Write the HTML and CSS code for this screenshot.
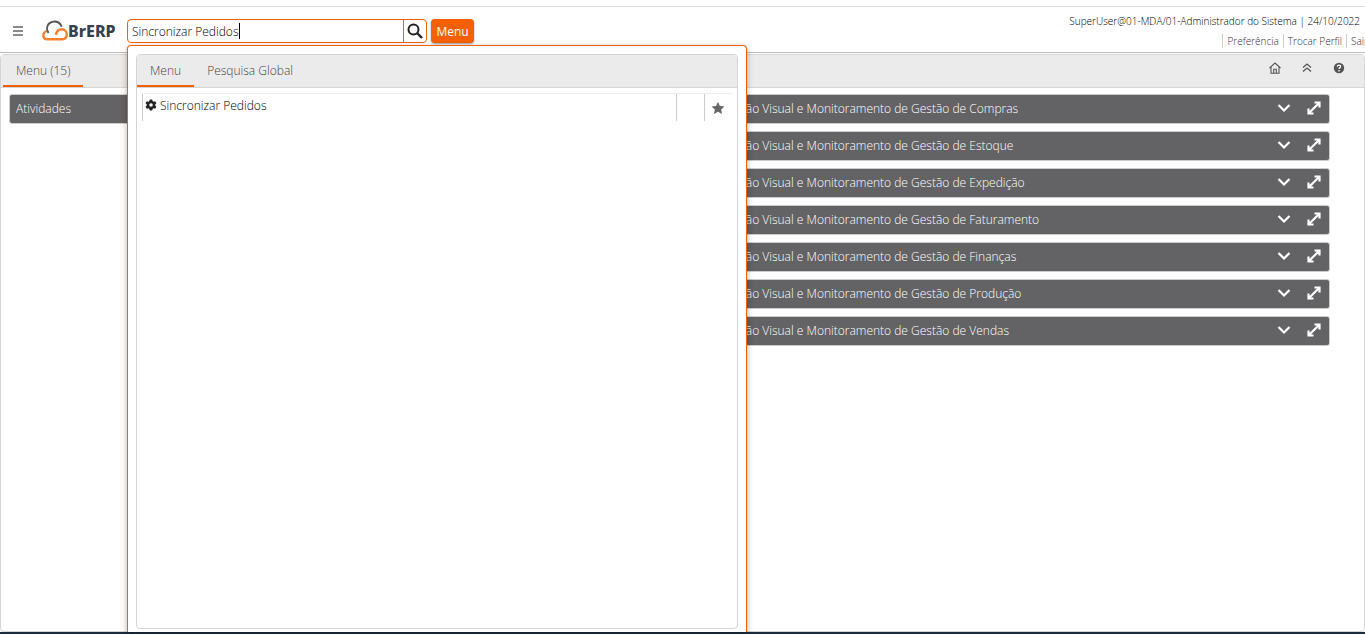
FILE: index.html
```
<!DOCTYPE html>
<html lang="pt-BR">
<head>
<meta charset="UTF-8">
<meta name="viewport" content="width=device-width, initial-scale=1.0">
<title>BrERP</title>
<link rel="stylesheet" href="styles.css">
</head>
<body>

<!-- shared icons -->
<svg class="sprite" aria-hidden="true">
    <symbol id="chevron" viewBox="0 0 14 14"><path d="M1.500 4 7 9.500l5.500-5.500" fill="none" stroke="currentColor" stroke-width="2.2"/></symbol>
    <symbol id="expand" viewBox="0 0 14 14"><path d="M7.500 1.500H12.500V6.500M12.500 1.500 1.500 12.500M1.500 7.500V12.500H6.500" fill="none" stroke="currentColor" stroke-width="2.200"/></symbol>
</svg>

<header class="header">
    <button class="icon-button burger" aria-label="Abrir menu lateral">
        <svg width="10" height="10" viewBox="0 0 10 10"><path d="M0 1h10M0 5h10M0 9h10" stroke="#666" stroke-width="1.300"/></svg>
    </button>
    <a href="#" class="logo">
        <svg width="26" height="21" viewBox="0 0 26 21" fill="none" stroke-width="2.400">
            <path d="M4.500 11C2.500 11.800 1.300 13.200 1.300 15.300c0 2.500 1.900 4 4.300 4H19.500c3.200 0 5.200-2 5.200-4.900s-2-5.200-5-5.200c-3 0-5.200 2-5.600 5.600" stroke="#f58232"/>
            <path d="M6.500 13C4.800 10.500 4.300 6.500 6.800 3.800 10 .4 16 .6 18.500 4.500c.5.700.8 1.400 1 2.200" stroke="#555" stroke-width="2"/>
        </svg>
        <span class="logo-name">BrERP</span>
    </a>
    <form class="search">
        <div class="search-field">
            <input type="text" class="search-input" value="Sincronizar Pedidos" aria-label="Pesquisar">
            <span class="caret"></span>
        </div>
        <button type="button" class="search-button" aria-label="Buscar">
            <svg width="16" height="16" viewBox="0 0 16 16" fill="none" stroke="#222" stroke-width="2"><circle cx="6.500" cy="6.500" r="5"/><path d="M10 10l5 5" stroke-width="2.400"/></svg>
        </button>
    </form>
    <button class="menu-button">Menu</button>
    <div class="user">
        <div class="user-name">SuperUser@01-MDA/01-Administrador do Sistema | 24/10/2022</div>
        <nav class="user-links">
            <a href="#">Preferência</a>
            <a href="#">Trocar Perfil</a>
            <a href="#">Sair</a>
        </nav>
    </div>
</header>

<main class="desktop">
    <div class="tab-bar">
        <button class="tab tab-main active">Menu (15)</button>
        <div class="tools">
            <button class="icon-button" aria-label="Início">
                <svg width="12" height="12" viewBox="0 0 12 12" fill="none" stroke="#555" stroke-width="1.100"><path d="M0.500 6 6 1l5.500 5M2 5v6.200h8V5M4.700 11V7.200h2.600V11"/></svg>
            </button>
            <button class="icon-button" aria-label="Recolher cabeçalho">
                <svg width="12" height="12" viewBox="0 0 12 12" fill="none" stroke="#555" stroke-width="1.300"><path d="M2 5.500l4-3.500 4 3.500M2 9.500l4-3.500 4 3.500"/></svg>
            </button>
            <button class="icon-button" aria-label="Ajuda">
                <svg width="12" height="12" viewBox="0 0 12 12"><circle cx="6" cy="6" r="5.200" fill="#555"/><path d="M4.300 4.700C4.400 2.600 7.700 2.700 7.600 4.600 7.500 5.700 6 5.600 6 7M6 8v1.400" fill="none" stroke="#fff" stroke-width="1.300"/></svg>
            </button>
        </div>
    </div>

    <div class="dashboard">
        <div class="column">
            <section class="panel"><h2>Atividades</h2></section>
        </div>
        <div class="column">
            <section class="panel">
                <h2>Gestão Visual e Monitoramento de Gestão de Compras</h2>
                <button class="icon-button" aria-label="Abrir"><svg width="14" height="14"><use href="#chevron"/></svg></button>
                <button class="icon-button" aria-label="Maximizar"><svg width="14" height="14"><use href="#expand"/></svg></button>
            </section>
            <section class="panel">
                <h2>Gestão Visual e Monitoramento de Gestão de Estoque</h2>
                <button class="icon-button" aria-label="Abrir"><svg width="14" height="14"><use href="#chevron"/></svg></button>
                <button class="icon-button" aria-label="Maximizar"><svg width="14" height="14"><use href="#expand"/></svg></button>
            </section>
            <section class="panel">
                <h2>Gestão Visual e Monitoramento de Gestão de Expedição</h2>
                <button class="icon-button" aria-label="Abrir"><svg width="14" height="14"><use href="#chevron"/></svg></button>
                <button class="icon-button" aria-label="Maximizar"><svg width="14" height="14"><use href="#expand"/></svg></button>
            </section>
            <section class="panel">
                <h2>Gestão Visual e Monitoramento de Gestão de Faturamento</h2>
                <button class="icon-button" aria-label="Abrir"><svg width="14" height="14"><use href="#chevron"/></svg></button>
                <button class="icon-button" aria-label="Maximizar"><svg width="14" height="14"><use href="#expand"/></svg></button>
            </section>
            <section class="panel">
                <h2>Gestão Visual e Monitoramento de Gestão de Finanças</h2>
                <button class="icon-button" aria-label="Abrir"><svg width="14" height="14"><use href="#chevron"/></svg></button>
                <button class="icon-button" aria-label="Maximizar"><svg width="14" height="14"><use href="#expand"/></svg></button>
            </section>
            <section class="panel">
                <h2>Gestão Visual e Monitoramento de Gestão de Produção</h2>
                <button class="icon-button" aria-label="Abrir"><svg width="14" height="14"><use href="#chevron"/></svg></button>
                <button class="icon-button" aria-label="Maximizar"><svg width="14" height="14"><use href="#expand"/></svg></button>
            </section>
            <section class="panel">
                <h2>Gestão Visual e Monitoramento de Gestão de Vendas</h2>
                <button class="icon-button" aria-label="Abrir"><svg width="14" height="14"><use href="#chevron"/></svg></button>
                <button class="icon-button" aria-label="Maximizar"><svg width="14" height="14"><use href="#expand"/></svg></button>
            </section>
        </div>
    </div>

    <!-- search results -->
    <div class="popup">
        <div class="popup-box">
            <div class="tab-bar">
                <button class="tab active">Menu</button>
                <button class="tab">Pesquisa Global</button>
            </div>
            <table class="results">
                <tr>
                    <td>
                        <a href="#">
                            <svg width="12" height="12" viewBox="0 0 12 12"><path d="M4.800 0.500h2.400l.4 1.600 1 .6 1.600-.5 1.200 2.100-1.200 1.100v1.200l1.200 1.100-1.200 2.100-1.600-.5-1 .6-.4 1.600H4.800l-.4-1.600-1-.6-1.600.5L.6 7.700l1.200-1.100V5.400L.6 4.300l1.200-2.100 1.600.5 1-.6zM6 4.200a1.800 1.800 0 1 0 0 3.600 1.800 1.800 0 0 0 0-3.600z" fill="#222" fill-rule="evenodd"/></svg>
                            Sincronizar Pedidos
                        </a>
                    </td>
                    <td class="col-new"></td>
                    <td class="col-star">
                        <button class="icon-button" aria-label="Favorito">
                            <svg width="14" height="14" viewBox="0 0 14 14"><path d="M7 .7l1.900 4.200 4.600.5-3.400 3.100.9 4.500L7 10.700 3 13l.9-4.500L.5 5.400l4.600-.5z" fill="#666"/></svg>
                        </button>
                    </td>
                </tr>
            </table>
        </div>
    </div>
</main>
<footer class="taskbar"></footer>

</body>
</html>
```
FILE: styles.css
```
* {
    box-sizing: border-box;
}
body {
    font-family: "Open Sans", "Noto Sans", sans-serif;
    font-size: 12px;
    font-weight: 300;
    margin: 0;
    height: 100vh;
    display: flex;
    flex-direction: column;
    overflow: hidden;
    background-color: #fff;
    color: #000;
}
a {
    color: inherit;
    text-decoration: none;
}
button, input {
    font: inherit;
    color: inherit;
}
.sprite {
    display: none;
}
.icon-button {
    display: flex;
    padding: 0;
    border: none;
    background: none;
    cursor: pointer;
}

/* header */
.header {
    display: flex;
    align-items: center;
    height: 47px;
    margin-top: 6px;
    padding-top: 2px;
    padding-left: 13px;
    border-top: 1px solid #d9d9d9;
    border-bottom: 1px solid #bbb;
}
.logo {
    display: flex;
    align-items: center;
    width: 85px;
    margin-left: 19px;
}
.logo-name {
    font-family: "Noto Sans", sans-serif;
    font-size: 16px;
    font-weight: 800;
    color: #36404f;
}
.search {
    display: flex;
    width: 300px;
    height: 24px;
    border: 1px solid #f26006;
    border-radius: 4px;
}
.search-field {
    position: relative;
    flex: 1;
}
.search-input {
    width: 100%;
    height: 100%;
    padding: 1px 4px 0;
    border: none;
    outline: none;
    background: none;
}
.caret {
    position: absolute;
    left: 111px;
    top: 3px;
    width: 1px;
    height: 16px;
    background-color: #000;
}
.search-button {
    display: flex;
    align-items: center;
    justify-content: center;
    width: 23px;
    padding: 0;
    border: none;
    border-left: 1px solid #f26006;
    background: none;
}
.menu-button {
    height: 24px;
    width: 43px;
    margin-left: 4px;
    padding: 1px 0 0;
    border: none;
    border-radius: 4px;
    background-color: #f55f05;
    box-shadow: 0 1px 2px rgba(0, 0, 0, 0.4);
    color: #fff;
    font-weight: 400;
}
.user {
    flex: 1;
    font-size: 10px;
    line-height: 14px;
}
.user-name {
    padding-right: 5px;
    text-align: right;
    color: #000;
}
.user-links {
    display: flex;
    justify-content: flex-end;
    margin-top: 6px;
    margin-right: -7px;
    color: #333;
}
.user-links a {
    padding: 0 4px;
    border-left: 1px solid #ccc;
}

/* desktop */
.desktop {
    position: relative;
    flex: 1;
    margin-top: 1px;
    border: 1px solid #d5d5d5;
    border-radius: 4px;
}
.tab-bar {
    display: flex;
    height: 33px;
    background-color: #ebebeb;
    border-bottom: 1px solid #d5d5d5;
}
.tab {
    padding: 0 13px;
    border: none;
    border-bottom: 2px solid transparent;
    background: none;
    color: #444;
}
.tab.active {
    border-color: #f26006;
}
.tab-main {
    margin-left: 2px;
}
.tools {
    display: flex;
    align-items: center;
    gap: 20px;
    margin-left: auto;
    padding: 0 19px 6px 0;
}
.dashboard {
    display: grid;
    grid-template-columns: 21fr 19fr;
    gap: 24px;
    padding: 6px 34px 0 8px;
}
.column {
    display: flex;
    flex-direction: column;
    gap: 7px;
}
.panel {
    display: flex;
    align-items: center;
    gap: 16px;
    height: 30px;
    padding: 0 8px 2px 6px;
    border: 1px solid #ccc;
    border-radius: 3px;
    background-color: #636365;
    color: #fff;
}
.panel h2 {
    flex: 1;
    margin: 0;
    font-size: 12px;
    font-weight: 300;
    white-space: nowrap;
}

/* popup */
.popup {
    position: absolute;
    top: -10px;
    bottom: -1px;
    left: 126px;
    width: 620px;
    padding: 8px 8px 3px;
    border: 1px solid #f26006;
    border-bottom: none;
    border-radius: 4px 4px 0 0;
    background-color: #fff;
    box-shadow: 0 2px 6px rgba(0, 0, 0, 0.3);
}
.popup-box {
    height: 100%;
    border: 1px solid #d5d5d5;
    border-radius: 4px;
    overflow: hidden;
}
.results {
    width: 590px;
    margin: 5px;
    border-collapse: collapse;
}
.results td {
    height: 27px;
    padding: 0 0 0 2px;
    border-top: 1px solid #eee;
    border-left: 1px solid #ccc;
}
.results a {
    display: flex;
    align-items: center;
    gap: 3px;
    padding-bottom: 4px;
}
.results .col-new {
    width: 28px;
}
.results .col-star {
    width: 28px;
    padding: 2px 0 0 6px;
}
.taskbar {
    height: 2px;
    background-color: #1b2b3c;
}
```
